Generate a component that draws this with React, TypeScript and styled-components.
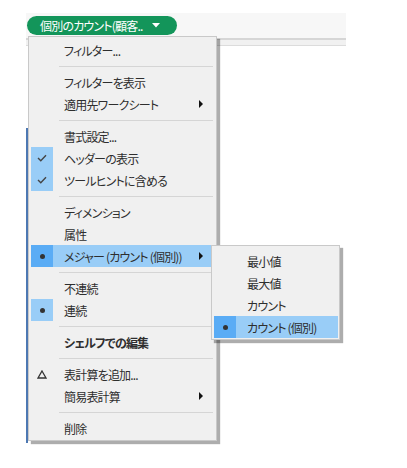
import React from 'react';
import styled, { createGlobalStyle } from 'styled-components';

const GlobalStyle = createGlobalStyle`
  body {
    margin: 0;
    background: #ffffff;
    font-family: 'Noto Sans CJK JP', 'Noto Sans', sans-serif;
  }
`;

const Page = styled.div`
  position: relative;
  width: 407px;
  height: 468px;
  overflow: hidden;
  background: #ffffff;
  padding-top: 13px;
  box-sizing: border-box;
`;

const ShelfBar = styled.div`
  margin-left: 26px;
  width: 319px;
  height: 25px;
  background: #f7f7f7;
  border-bottom: 2px solid #d6d6d6;
  display: flex;
  align-items: center;
  padding-left: 1px;
  box-sizing: content-box;
`;

const ShelfBand = styled.div`
  margin-left: 26px;
  width: 320px;
  height: 5px;
  background: #f1f1f1;
  border-bottom: 1px solid #dcdcdc;
`;

const Pane = styled.div`
  margin: 82px 0 0 26px;
  width: 40px;
  height: 315px;
  border-left: 2px solid #4d78b2;
`;

const Pill = styled.div`
  height: 19px;
  width: 150px;
  border-radius: 10px;
  background: #13955a;
  color: #ffffff;
  font-size: 12px;
  letter-spacing: -0.8px;
  font-feature-settings: 'palt' 1;
  display: flex;
  align-items: center;
  padding-left: 13px;
  box-sizing: border-box;
  gap: 9px;
  white-space: nowrap;
`;

const Menu = styled.div<{ $left: number; $top: number; $width: number }>`
  position: absolute;
  left: ${(p) => p.$left}px;
  top: ${(p) => p.$top}px;
  width: ${(p) => p.$width}px;
  background: #f0f0f0;
  border: 1px solid #c9c9c9;
  box-shadow: 3px 3px 1px rgba(0, 0, 0, 0.32);
  padding: 2px 4px 1px 2px;
  box-sizing: border-box;
  font-size: 12px;
  color: #2e2e2e;
  letter-spacing: -0.8px;
  font-feature-settings: 'palt' 1;
`;

const Row = styled.div<{ $hl?: boolean; $bold?: boolean }>`
  display: flex;
  align-items: center;
  height: 22px;
  background: ${(p) => (p.$hl ? '#99cdf7' : 'transparent')};
  font-weight: ${(p) => (p.$bold ? 700 : 400)};
  white-space: nowrap;
`;

const IconCell = styled.div<{ $bg?: 'light' | 'dark' }>`
  width: 22px;
  height: 100%;
  flex: none;
  display: flex;
  align-items: center;
  justify-content: center;
  background: ${(p) =>
    p.$bg === 'dark' ? '#5aacf5' : p.$bg === 'light' ? '#99cdf7' : 'transparent'};
`;

const Label = styled.span`
  flex: 1;
  padding-left: 11px;
`;

const Arrow = styled.span`
  width: 0;
  height: 0;
  border-top: 4px solid transparent;
  border-bottom: 4px solid transparent;
  border-left: 4px solid #111;
  margin-right: 9px;
`;

const Dot = styled.span`
  width: 5px;
  height: 5px;
  border-radius: 50%;
  background: #333;
`;

const Separator = styled.div`
  height: 10px;
  display: flex;
  align-items: center;
  margin-left: 28px;
  margin-right: -1px;
  &::after {
    content: '';
    flex: 1;
    height: 1px;
    background: #d5d5d5;
  }
`;

const Check = () => (
  <svg width="10" height="8" viewBox="0 0 10 8">
    <path d="M1 4 L3.8 6.8 L9 1.2" fill="none" stroke="#444" strokeWidth="1.4" />
  </svg>
);

const Delta = () => (
  <svg width="10" height="9" viewBox="0 0 10 9">
    <path d="M5 1 L9 8 L1 8 Z" fill="none" stroke="#333" strokeWidth="1.3" />
  </svg>
);

const Caret = () => (
  <svg width="8" height="5" viewBox="0 0 8 5">
    <path d="M0 0 L8 0 L4 4.5 Z" fill="#ffffff" />
  </svg>
);

type Item =
  | { sep: true }
  | {
      label: string;
      icon?: 'check' | 'dot' | 'delta';
      iconBg?: 'light' | 'dark';
      hl?: boolean;
      sub?: boolean;
      bold?: boolean;
    };

const mainItems: Item[] = [
  { label: 'フィルター...' },
  { sep: true },
  { label: 'フィルターを表示' },
  { label: '適用先ワークシート', sub: true },
  { sep: true },
  { label: '書式設定...' },
  { label: 'ヘッダーの表示', icon: 'check', iconBg: 'light' },
  { label: 'ツールヒントに含める', icon: 'check', iconBg: 'light' },
  { sep: true },
  { label: 'ディメンション' },
  { label: '属性' },
  { label: 'メジャー (カウント (個別))', icon: 'dot', iconBg: 'dark', hl: true, sub: true },
  { sep: true },
  { label: '不連続' },
  { label: '連続', icon: 'dot', iconBg: 'light' },
  { sep: true },
  { label: 'シェルフでの編集', bold: true },
  { sep: true },
  { label: '表計算を追加...', icon: 'delta' },
  { label: '簡易表計算', sub: true },
  { sep: true },
  { label: '削除' },
];

const subItems: Item[] = [
  { label: '最小値' },
  { label: '最大値' },
  { label: 'カウント' },
  { label: 'カウント (個別)', icon: 'dot', iconBg: 'dark', hl: true },
];

const renderItems = (items: Item[]) =>
  items.map((it, i) => {
    if ('sep' in it) return <Separator key={i} />;
    return (
      <Row key={i} $hl={it.hl} $bold={it.bold}>
        <IconCell $bg={it.iconBg}>
          {it.icon === 'check' && <Check />}
          {it.icon === 'dot' && <Dot />}
          {it.icon === 'delta' && <Delta />}
        </IconCell>
        <Label>{it.label}</Label>
        {it.sub && <Arrow />}
      </Row>
    );
  });

const App: React.FC = () => {
  return (
    <Page>
      <GlobalStyle />
      <ShelfBar>
        <Pill>
          <span>個別のカウント(顧客..</span>
          <Caret />
        </Pill>
      </ShelfBar>
      <ShelfBand />
      <Pane />
      <Menu $left={28} $top={36} $width={189}>
        {renderItems(mainItems)}
      </Menu>
      <Menu $left={211} $top={245} $width={129} style={{ paddingTop: 4, paddingRight: 1 }}>
        {renderItems(subItems)}
      </Menu>
    </Page>
  );
};

export default App;
